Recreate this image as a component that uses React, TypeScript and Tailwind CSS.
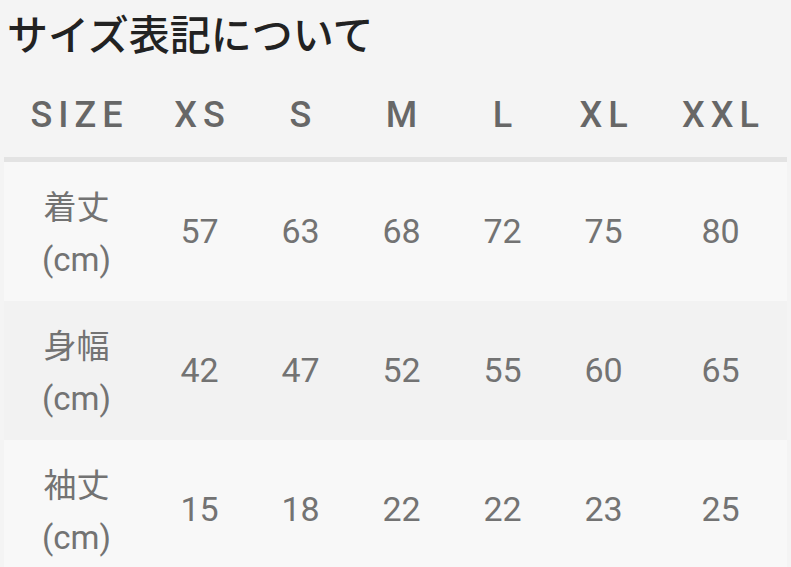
const sizes = ['XS', 'S', 'M', 'L', 'XL', 'XXL']

const rows = [
  { label: '着丈', values: [57, 63, 68, 72, 75, 80] },
  { label: '身幅', values: [42, 47, 52, 55, 60, 65] },
  { label: '袖丈', values: [15, 18, 22, 22, 23, 25] },
]

const cols = 'grid grid-cols-[145px_101px_101px_101px_101px_101px_133px]'

export default function App() {
  return (
    <div
      className="w-[791px] h-[567px] overflow-hidden bg-[#f4f4f4]"
      style={{ fontFamily: 'Roboto, "Noto Sans CJK JP", sans-serif' }}
    >
      <h1 className="pl-[7px] pt-[12px] text-[41px] leading-[48px] font-medium text-[#222]">
        サイズ表記について
      </h1>
      <div className="mx-1">
        <div className={`${cols} h-[102px] items-center border-b-[5px] border-[#e3e3e3] pt-[13px]`}>
          {['SIZE', ...sizes].map((s) => (
            <div
              key={s}
              className="text-center text-[36px] font-medium tracking-[6px] pl-[6px] text-[#676767]"
            >
              {s}
            </div>
          ))}
        </div>
        {rows.map((row, i) => (
          <div
            key={row.label}
            className={`${cols} h-[139px] items-center ${i % 2 === 0 ? 'bg-[#f8f8f8]' : 'bg-[#f2f2f2]'}`}
          >
            <div className="pt-[4px] text-center text-[33px] leading-[52px] text-[#737373]">
              <div>{row.label}</div>
              <div>(cm)</div>
            </div>
            {row.values.map((v, j) => (
              <div key={j} className="text-center text-[34px] text-[#737373]">
                {v}
              </div>
            ))}
          </div>
        ))}
      </div>
    </div>
  )
}
